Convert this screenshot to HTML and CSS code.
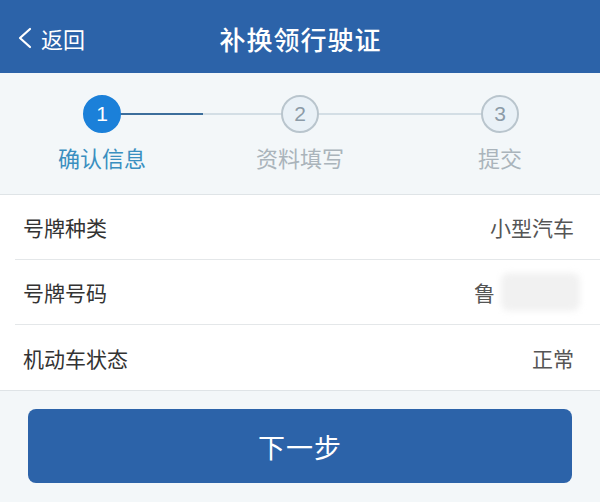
FILE: index.html
```html
<!DOCTYPE html>
<html lang="zh">
<head>
<meta charset="utf-8">
<title>补换领行驶证</title>
<link rel="stylesheet" href="styles.css">
</head>
<body>
<div class="page">
  <header class="topbar">
    <div class="back">
      <svg class="chev" width="16" height="22" viewBox="0 0 16 22"><path d="M13 2 L3 11 L13 20" fill="none" stroke="#ffffff" stroke-width="2.2" stroke-linecap="round" stroke-linejoin="round"/></svg>
      <span>返回</span>
    </div>
    <h1 class="title">补换领行驶证</h1>
  </header>

  <section class="steps">
    <div class="track">
      <div class="line line-done"></div>
      <div class="line line-todo"></div>
    </div>
    <div class="step active">
      <div class="dot">1</div>
      <div class="label">确认信息</div>
    </div>
    <div class="step">
      <div class="dot">2</div>
      <div class="label">资料填写</div>
    </div>
    <div class="step">
      <div class="dot">3</div>
      <div class="label">提交</div>
    </div>
  </section>

  <section class="list">
    <div class="row">
      <span class="key">号牌种类</span>
      <span class="val">小型汽车</span>
    </div>
    <div class="row">
      <span class="key">号牌号码</span>
      <span class="val plate">鲁<span class="blur"></span></span>
    </div>
    <div class="row last">
      <span class="key">机动车状态</span>
      <span class="val">正常</span>
    </div>
  </section>

  <div class="actions">
    <button class="next">下一步</button>
  </div>
</div>
</body>
</html>
```

FILE: styles.css
```css
* { box-sizing: border-box; }
html, body { margin: 0; padding: 0; }
body {
  width: 600px;
  height: 502px;
  overflow: hidden;
  background: #f3f7f9;
  font-family: "Noto Sans CJK SC", "Noto Sans", sans-serif;
}
.page { display: flex; flex-direction: column; }

.topbar {
  height: 73px;
  background: #2c63a9;
  display: flex;
  align-items: center;
  justify-content: center;
  position: relative;
  color: #fff;
}
.back {
  position: absolute;
  left: 17px;
  top: 0;
  bottom: 0;
  display: flex;
  align-items: center;
  gap: 8px;
  font-size: 22px;
  padding-top: 2px;
}
.chev { display: block; }
.title {
  margin: 0;
  font-size: 26px;
  font-weight: 500;
  letter-spacing: 1px;
  padding-top: 3px;
  padding-left: 1px;
}

.steps {
  height: 122px;
  display: grid;
  grid-template-columns: repeat(3, 1fr);
  position: relative;
  background: #f3f7f9;
  border-bottom: 1px solid #dfe4e7;
}
.track {
  position: absolute;
  left: 103px;
  right: 100px;
  top: 40px;
  height: 2px;
  display: flex;
}
.line-done { width: 100px; background: #3c6e9c; height: 2px; }
.line-todo { flex: 1; background: #d3dee5; height: 2px; }
.step {
  display: flex;
  flex-direction: column;
  align-items: center;
  padding-top: 22px;
  position: relative;
}
.dot {
  width: 38px;
  height: 38px;
  border-radius: 50%;
  border: 2px solid #b9c5cd;
  background: #e9f1f7;
  color: #8c9ba7;
  font-family: "Liberation Sans", Arial, sans-serif;
  font-size: 21px;
  display: flex;
  align-items: center;
  justify-content: center;
  position: relative;
  z-index: 1;
}
.step:nth-child(2) { margin-left: 4px; }
.active .dot {
  background: #1b80d9;
  border-color: #1b80d9;
  color: #fff;
}
.label {
  margin-top: 8px;
  font-size: 22px;
  color: #aab4bb;
}
.active .label { color: #3a8fc0; }

.list {
  background: #fff;
  border-bottom: 1px solid #dfe4e7;
}
.row {
  height: 65px;
  margin-left: 15px;
  padding-left: 8px;
  padding-right: 26px;
  display: flex;
  align-items: center;
  justify-content: space-between;
  border-bottom: 1px solid #e4e7e9;
  font-size: 21px;
}
.row.last { border-bottom: none; }
.key { color: #333; }
.val { color: #555; display: flex; align-items: center; }
.blur {
  display: inline-block;
  width: 79px;
  height: 38px;
  margin-left: 6px;
  margin-right: -6px;
  background: #f1f1f1;
  border-radius: 8px;
  filter: blur(3px);
}

.actions {
  padding: 18px 28px 0 28px;
}
.next {
  width: 100%;
  height: 74px;
  border: none;
  border-radius: 8px;
  background: #2c63a9;
  color: #fff;
  font-family: "Noto Sans CJK SC", "Noto Sans", sans-serif;
  font-size: 27px;
  letter-spacing: 1px;
}
```
